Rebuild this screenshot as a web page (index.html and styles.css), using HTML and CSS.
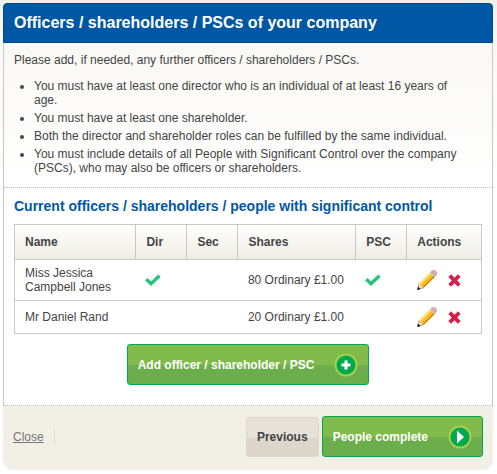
FILE: index.html
```
<!DOCTYPE html>
<html lang="en">
  <head>
    <meta charset="utf-8">
    <title>Officers / shareholders / PSCs</title>
    <link rel="stylesheet" href="styles.css">
  </head>
  <body>
    <!-- shared icons -->
    <svg class="sprite" aria-hidden="true">
      <symbol id="tick" viewBox="0 0 16 12">
        <path d="M1.3 5.3 L6 9.7 L14.5 1.8" fill="none" stroke="#25c380" stroke-width="3.4" />
      </symbol>
      <symbol id="cross" viewBox="0 0 13 13">
        <path d="M1.7 1.7 L11.3 11.3 M11.3 1.7 L1.7 11.3" fill="none" stroke="#d6204b" stroke-width="3.8" />
      </symbol>
      <symbol id="pencil" viewBox="0 0 20 20">
        <path d="M.5 19.5 L2 13.4 L6.8 17.8 Z" fill="#f0dcc0" stroke="#8c7a66" stroke-width=".6" />
        <path d="M.2 19.9 L1 16.7 L3.6 18.9 Z" fill="#111" />
        <path d="M2 13.4 L12.9 2.5 L17.7 6.9 L6.8 17.8 Z" fill="#fbbd20" />
        <path d="M2 13.4 L12.9 2.5 L14.3 3.8 L3.4 14.7 Z" fill="#ffe18a" />
        <path d="M5.8 16.9 L16.7 6 L17.7 6.9 L6.8 17.8 Z" fill="#c98208" />
        <path d="M12.9 2.5 L14.5 .9 L19.3 5.3 L17.7 6.9 Z" fill="#b9bcbf" />
        <path d="M14.5 .9 Q16.5 -.5 18.6 1 Q20.6 3 19.3 5.3 Z" fill="#f0a8b4" stroke="#bb8890" stroke-width=".5" />
      </symbol>
    </svg>

    <form class="panel">
      <h1 class="panel-title">Officers / shareholders / PSCs of your company</h1>

      <div class="panel-body">
        <div class="intro">
          <p>Please add, if needed, any further officers / shareholders / PSCs.</p>
          <ul>
            <li>You must have at least one director who is an individual of at least 16 years of age.</li>
            <li>You must have at least one shareholder.</li>
            <li>Both the director and shareholder roles can be fulfilled by the same individual.</li>
            <li>You must include details of all People with Significant Control over the company (PSCs), who may also be officers or shareholders.</li>
          </ul>
        </div>

        <div class="people">
          <h2>Current officers / shareholders / people with significant control</h2>
          <table>
            <colgroup>
              <col class="col-name">
              <col class="col-flag">
              <col class="col-flag">
              <col class="col-shares">
              <col class="col-flag">
              <col class="col-actions">
            </colgroup>
            <thead>
              <tr>
                <th>Name</th>
                <th>Dir</th>
                <th>Sec</th>
                <th>Shares</th>
                <th>PSC</th>
                <th>Actions</th>
              </tr>
            </thead>
            <tbody>
              <tr>
                <td>Miss Jessica Campbell Jones</td>
                <td><svg class="tick" role="img" aria-label="Yes"><use href="#tick" /></svg></td>
                <td></td>
                <td>80 Ordinary £1.00</td>
                <td><svg class="tick" role="img" aria-label="Yes"><use href="#tick" /></svg></td>
                <td>
                  <div class="actions">
                    <a href="#edit-1" aria-label="Edit"><svg class="pencil"><use href="#pencil" /></svg></a>
                    <a href="#delete-1" aria-label="Delete"><svg class="cross"><use href="#cross" /></svg></a>
                  </div>
                </td>
              </tr>
              <tr>
                <td>Mr Daniel Rand</td>
                <td></td>
                <td></td>
                <td>20 Ordinary £1.00</td>
                <td></td>
                <td>
                  <div class="actions">
                    <a href="#edit-2" aria-label="Edit"><svg class="pencil"><use href="#pencil" /></svg></a>
                    <a href="#delete-2" aria-label="Delete"><svg class="cross"><use href="#cross" /></svg></a>
                  </div>
                </td>
              </tr>
            </tbody>
          </table>
          <button type="button" class="btn btn-add">
            Add officer / shareholder / PSC
            <svg class="badge" viewBox="0 0 24 24" aria-hidden="true">
              <circle cx="12" cy="12" r="10.5" fill="#00a84f" stroke="#a3cf4a" stroke-width="2" />
              <path d="M12 7.5 V16.5 M7.5 12 H16.5" stroke="#fff" stroke-width="3" />
            </svg>
          </button>
        </div>
      </div>

      <div class="panel-footer">
        <a class="close" href="#close">Close</a>
        <button type="button" class="btn btn-previous">Previous</button>
        <button type="button" class="btn">
          People complete
          <svg class="badge" viewBox="0 0 24 24" aria-hidden="true">
            <circle cx="12" cy="12" r="10.5" fill="#00a84f" stroke="#a3cf4a" stroke-width="2" />
            <path d="M9 5.5 L16 12 L9 18.5 Z" fill="#fff" />
          </svg>
        </button>
      </div>
    </form>
  </body>
</html>
```
FILE: styles.css
```
* {
  box-sizing: border-box;
}

body {
  margin: 0;
  padding: 3px 4px 4px 3px;
  background: linear-gradient(#f3f0ea, #f9f8f4 44px, #fff 180px) no-repeat #fff;
  color: #444;
  font: 12px/14px "Liberation Sans", Arial, sans-serif;
}

h1,
h2,
p,
ul {
  margin: 0;
}

.sprite {
  position: absolute;
  width: 0;
  height: 0;
}

.panel-title {
  padding: 9px 10px;
  border: 1px solid #004a8c;
  border-radius: 4px 4px 0 0;
  background: #0057a3;
  color: #fff;
  font-size: 16px;
  line-height: 20px;
}

.panel-body {
  border: 1px solid #c8c8c8;
  border-width: 0 1px;
}

.intro {
  padding: 10px 20px 12px 10px;
  border-bottom: 1px dotted #bbb;
}

.intro ul {
  margin-top: 12px;
  padding-left: 20px;
}

.intro li + li {
  margin-top: 4px;
}

.people {
  padding: 10px 10px 20px;
  border-bottom: 1px dotted #bbb;
}

h2 {
  color: #0057a3;
  font-size: 14px;
  line-height: 16px;
}

table {
  width: 100%;
  margin-top: 10px;
  border: 1px solid #c8c8c8;
  border-collapse: collapse;
  table-layout: fixed;
}

.col-name {
  width: 26%;
}

.col-flag {
  width: 51px;
}

.col-actions {
  width: 16%;
}

th,
td {
  padding: 6px 10px;
  text-align: left;
}

thead tr {
  height: 35px;
  background: linear-gradient(#fff, #efece4);
}

th {
  border: 1px solid #c8c8c8;
}

tbody tr {
  border-top: 1px solid #c8c8c8;
}

td svg {
  display: block;
}

.tick {
  width: 16px;
  height: 12px;
}

td:has(.tick) {
  padding-left: 9px;
}

.actions {
  display: flex;
  align-items: center;
  gap: 11px;
}

.pencil {
  width: 20px;
  height: 20px;
}

.cross {
  width: 13px;
  height: 13px;
}

.btn {
  display: flex;
  align-items: center;
  gap: 20px;
  height: 41px;
  padding: 0 10px;
  border: 1px solid #00a651;
  border-radius: 3px;
  background: linear-gradient(#81bb4b 52%, #6bae4b 52%);
  color: #fff;
  font: bold 12px/14px "Liberation Sans", Arial, sans-serif;
  cursor: pointer;
}

.btn-add {
  margin: 10px auto 0;
}

.btn-previous {
  height: 40px;
  border-color: #ddd8cd;
  background: linear-gradient(#e6e2d9 52%, #ddd7cb 52%);
  color: #444;
}

.badge {
  width: 24px;
  height: 24px;
}

.panel-footer {
  display: flex;
  align-items: center;
  gap: 3px;
  padding: 10px 10px 13px;
  border-radius: 0 0 10px 10px;
  background: #f2efe7;
}

.close {
  margin-right: auto;
  padding-right: 10px;
  border-right: 1px solid #ddd8cb;
  color: #777;
}
```
